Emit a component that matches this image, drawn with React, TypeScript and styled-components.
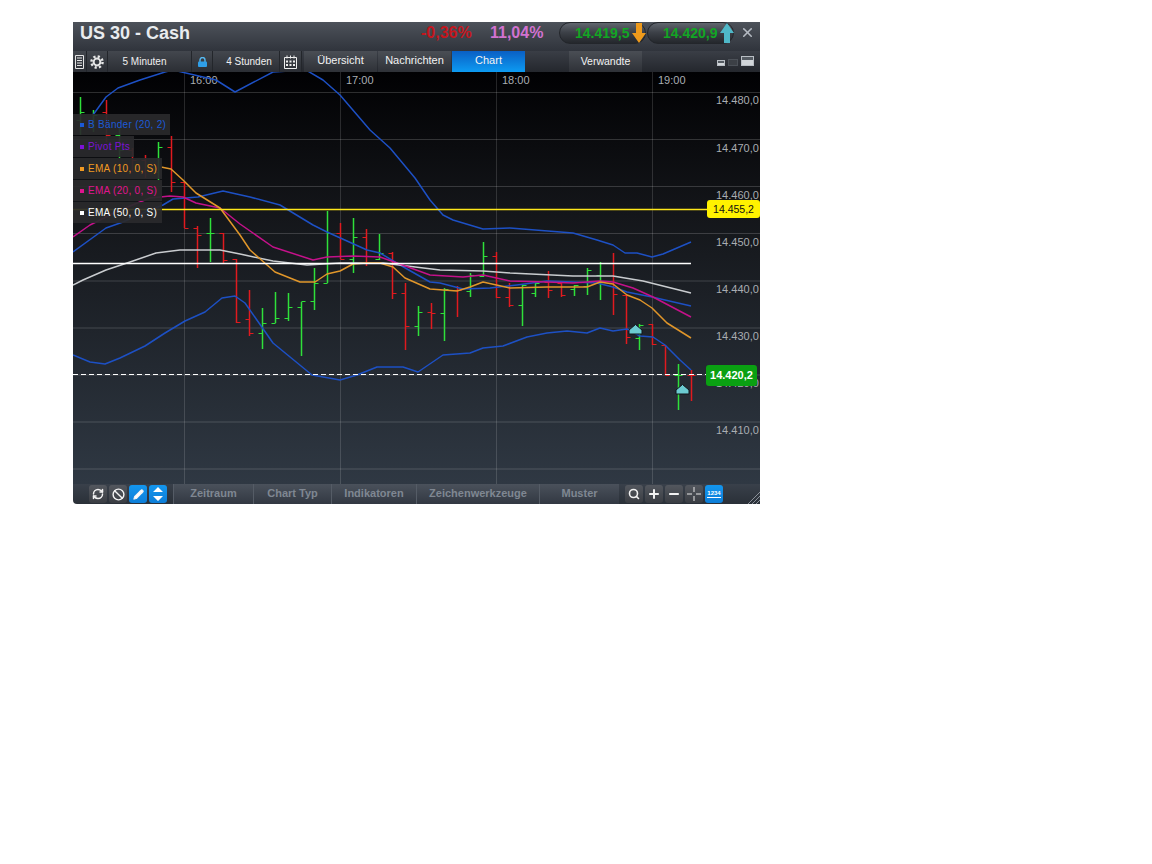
import React from 'react';
import styled, { createGlobalStyle } from 'styled-components';
import { Ban, Minus, Pencil, Plus, RefreshCw, Search, X } from 'lucide-react';

const GlobalStyle = createGlobalStyle`
	html, body {
		margin: 0;
		padding: 0;
		background: #fff;
		font-family: 'Liberation Sans', Arial, sans-serif;
	}
`;

const GREEN = '#2fe03a';
const RED = '#e01a1f';

// k = candle index (13px step from x=80.5), high, low, open tick, close tick
const bars: [number, number, number, number, number, string][] = [
	[0, 97, 135, 120, 112, GREEN], [1, 110, 132, 125, 115, GREEN], [2, 100, 142, 112, 135, RED],
	[3, 128, 158, 135, 150, GREEN], [4, 148, 172, 150, 160, RED], [5, 155, 178, 160, 170, RED],
	[6, 142, 180, 172, 147, GREEN], [7, 136, 192, 147, 182, RED], [8, 182, 228, 182, 228, RED],
	[9, 226, 268, 228, 235, RED], [10, 218, 262, 233, 233, GREEN], [11, 233, 263, 233, 260, RED],
	[12, 259, 323, 259, 322, RED], [13, 290, 336, 319, 333, RED], [14, 308, 349, 333, 323, GREEN],
	[15, 292, 323, 323, 318, GREEN], [16, 293, 321, 318, 307, GREEN], [17, 302, 356, 307, 301, GREEN],
	[18, 268, 310, 301, 283, GREEN], [19, 211, 283, 283, 233, GREEN], [20, 223, 259, 233, 259, RED],
	[21, 218, 273, 259, 237, GREEN], [22, 229, 266, 237, 263, RED], [23, 234, 260, 259, 253, GREEN],
	[24, 252, 299, 253, 293, RED], [25, 283, 350, 293, 326, RED], [26, 306, 336, 326, 312, GREEN],
	[27, 303, 329, 312, 313, RED], [28, 288, 341, 313, 289, GREEN], [29, 286, 317, 290, 290, RED],
	[30, 273, 297, 291, 275, GREEN], [31, 242, 277, 276, 256, GREEN], [32, 252, 298, 256, 297, RED],
	[33, 283, 307, 297, 305, RED], [34, 285, 326, 305, 285, GREEN], [35, 282, 297, 293, 283, GREEN],
	[36, 271, 298, 282, 290, RED], [37, 282, 297, 283, 295, RED], [38, 285, 296, 289, 285, GREEN],
	[39, 268, 295, 286, 270, GREEN], [40, 262, 300, 275, 263, GREEN], [41, 253, 315, 263, 294, RED],
	[42, 295, 344, 295, 337, RED], [43, 324, 350, 338, 325, GREEN], [44, 324, 345, 324, 344, RED],
	[45, 345, 375, 345, 375, RED], [46, 364, 410, 375, 375, GREEN], [47, 370, 401, 375, 375, RED],
];

const lines: { color: string; pts: string }[] = [
	{ color: '#1d50c4', pts: '93,115 106,97 118,88 140,80 165,72 173,70 216,80 235,92 273,72 306,70 323,80 340,95 370,130 390,148 415,178 430,200 443,215 453,220 483,229 510,228 573,233 597,240 613,245 625,253 637,253 652,257 663,254 691,242' },
	{ color: '#1d50c4', pts: '73,252 106,228 123,222 145,212 163,205 173,199 198,197 223,191 250,197 280,205 313,225 327,232 367,250 380,253 400,265 430,282 440,283 463,289 490,288 517,285 547,281 573,282 597,283 613,287 627,292 652,297 691,306' },
	{ color: '#1d50c4', pts: '73,355 90,362 105,364 120,358 145,346 165,333 185,321 205,312 222,298 235,296 245,303 273,343 312,375 340,380 357,375 377,367 403,367 418,372 443,355 470,353 483,348 503,346 527,337 547,333 567,331 587,333 600,328 613,331 627,329 640,336 653,337 665,345 680,360 691,370' },
	{ color: '#c9cccf', pts: '73,285 83,280 106,270 130,262 156,253 180,250 220,250 240,254 273,261 307,265 340,263 383,263 407,266 440,270 483,271 510,273 573,276 613,276 643,281 691,293' },
	{ color: '#c4118a', pts: '73,237 90,225 120,210 150,198 170,196 183,197 196,203 220,208 240,224 273,247 313,260 327,257 353,256 380,257 397,263 430,275 463,277 483,275 510,281 547,282 573,283 600,281 613,282 633,288 653,297 691,317' },
	{ color: '#e0962a', pts: '161,167 171,169 183,180 196,193 220,208 240,235 250,250 275,272 300,282 315,282 327,274 340,271 353,264 367,263 380,263 393,267 405,278 430,289 457,291 470,287 483,282 510,288 547,287 587,287 600,282 613,284 627,295 640,300 652,308 667,323 691,338' },
];

const gridY = [92.5, 139.5, 186.5, 233.5, 281, 328, 375, 422, 469];
const gridX = [184.5, 340.5, 496.5, 652.5];
const times = ['16:00', '17:00', '18:00', '19:00'];
const prices: [string, number][] = [
	['14.480,0', 104], ['14.470,0', 152], ['14.460,0', 199], ['14.450,0', 246],
	['14.440,0', 293], ['14.430,0', 340], ['14.420,0', 387], ['14.410,0', 434],
];
const legend: [string, string, number][] = [
	['B Bänder (20, 2)', '#1c5ad8', 97],
	['Pivot Pts', '#7d12d6', 61],
	['EMA (10, 0, S)', '#f09a22', 89],
	['EMA (20, 0, S)', '#e0148e', 89],
	['EMA (50, 0, S)', '#ffffff', 89],
];

export default function App() {
	return (
		<Page>
			<GlobalStyle />
			<Window>
				<Header>
					<Title>US 30 - Cash</Title>
					<Change>-0,36%</Change>
					<Percent>11,04%</Percent>
					<Pills>
						<Pill>
							14.419,5
							<ArrowIcon viewBox="0 0 14 20">
								<path d="M4 0h6v10h4L7 20 0 10h4z" fill="#ee9a1c" />
							</ArrowIcon>
						</Pill>
						<Pill>
							14.420,9
							<ArrowIcon viewBox="0 0 14 20">
								<path d="M4 20h6V10h4L7 0 0 10h4z" fill="#4fb8c8" />
							</ArrowIcon>
						</Pill>
					</Pills>
					<CloseButton>
						<X size={15} strokeWidth={2.6} />
					</CloseButton>
				</Header>

				<TabBar>
					<ToolCell $width={14}>
						<svg width="9" height="14" viewBox="0 0 9 14">
							<path d="M.5.5h8v13h-8zM2 3h5M2 5.5h5M2 8h5M2 10.5h5" fill="none" stroke="#e4e4e4" />
						</svg>
					</ToolCell>
					<ToolCell $width={21}>
						<svg width="14" height="14" viewBox="0 0 14 14" fill="none" stroke="#e6e6e6">
							<circle cx="7" cy="7" r="3.4" strokeWidth="2" />
							<circle cx="7" cy="7" r="5.6" strokeWidth="2.4" strokeDasharray="2.2 2.2" />
						</svg>
					</ToolCell>
					<TimeCell $width={84} $shift={-5}>5 Minuten</TimeCell>
					<ToolCell $width={21}>
						<svg width="9" height="10" viewBox="0 0 9 10">
							<path d="M2 5V3a2.5 2.5 0 0 1 5 0v2" fill="none" stroke="#56b8f0" strokeWidth="1.4" />
							<rect y="4.5" width="9" height="5.5" rx="1" fill="#2f9fe8" />
						</svg>
					</ToolCell>
					<TimeCell $width={67} $shift={3}>4 Stunden</TimeCell>
					<ToolCell $width={22}>
						<svg width="13" height="14" viewBox="0 0 13 14">
							<path d="M.5 2.5h12v11H.5zM3 .5v3M6.5.5v3M10 .5v3" fill="none" stroke="#eee" />
							<path d="M2 5.5h2v2H2zM5.5 5.5h2v2h-2zM9 5.5h2v2H9zM2 9h2v2H2zM5.5 9h2v2h-2zM9 9h2v2H9z" fill="#eee" />
						</svg>
					</ToolCell>
					<Tab $left={2}>Übersicht</Tab>
					<Tab $left={1}>Nachrichten</Tab>
					<Tab $left={1} $active>Chart</Tab>
					<Tab $left={44} $small>Verwandte</Tab>
					<WindowIcons>
						<SizeIcon $w={6} $h={4} />
						<SizeIcon $w={8} $h={5} $dim />
						<SizeIcon $w={11} $h={8} />
					</WindowIcons>
				</TabBar>

				<ChartArea>
					<ChartSvg viewBox="73 72 687 412" width="687" height="412">
						<defs>
							<linearGradient id="chartBg" x1="0" y1="0" x2="0" y2="1">
								<stop offset="0" stopColor="#010103" />
								<stop offset="0.35" stopColor="#14161a" />
								<stop offset="1" stopColor="#2f3843" />
							</linearGradient>
						</defs>
						<rect x="73" y="72" width="687" height="412" fill="url(#chartBg)" />
						{gridY.map((y) => (
							<line key={y} x1="73" x2="760" y1={y} y2={y} stroke="#fff" strokeOpacity="0.17" />
						))}
						{gridX.map((x) => (
							<line key={x} x1={x} x2={x} y1="72" y2="484" stroke="#fff" strokeOpacity="0.14" />
						))}
						{times.map((t, i) => (
							<AxisText key={t} x={gridX[i] + 5.5} y="84">{t}</AxisText>
						))}
						{prices.map(([p, y]) => (
							<AxisText key={p} x="716" y={y}>{p}</AxisText>
						))}
						{bars.map(([k, high, low, open, close, color]) => {
							const x = 80.5 + k * 13;
							return (
								<g key={k} stroke={color} fill="none">
									<path d={`M${x} ${high}V${low}`} strokeWidth="1.5" />
									<path d={`M${x - 4} ${open + 0.5}H${x}M${x} ${close + 0.5}H${x + 4}`} />
								</g>
							);
						})}
						{lines.map((l) => (
							<polyline key={l.pts} points={l.pts} fill="none" stroke={l.color} strokeWidth="1.5" strokeLinejoin="round" />
						))}
						<line x1="73" x2="691" y1="263.5" y2="263.5" stroke="#fff" strokeWidth="1.3" />
						<line x1="73" x2="710" y1="209.5" y2="209.5" stroke="#ffe81a" strokeWidth="1.6" />
						<line x1="73" x2="710" y1="374.5" y2="374.5" stroke="#fff" strokeWidth="1.2" strokeDasharray="5 3" />
						{[[635.5, 324.5], [682.5, 384.5]].map(([x, y]) => (
							<path
								key={x}
								d={`M${x} ${y}l6.5 5.5v4h-13v-4z`}
								fill="#6ccbd2"
								stroke="#10151b"
							/>
						))}
					</ChartSvg>

					<LegendStack>
						{legend.map(([label, color, width]) => (
							<LegendRow key={label} $color={color} $width={width}>
								<LegendDot $color={color} />
								{label}
							</LegendRow>
						))}
					</LegendStack>

					<PriceTag $top={128} $left={634} $width={53} $height={18} $bg="#fff200" $fg="#111">14.455,2</PriceTag>
					<PriceTag $top={293} $left={633} $width={51} $height={21} $bg="#0aa012" $fg="#fff" $bold>14.420,2</PriceTag>
				</ChartArea>

				<Footer>
					<FooterTools $width={100}>
						<IconButton><RefreshCw size={12} strokeWidth={3} /></IconButton>
						<IconButton><Ban size={13} strokeWidth={2.6} /></IconButton>
						<IconButton $active><Pencil size={11} strokeWidth={2.4} fill="#fff" /></IconButton>
						<IconButton $active>
							<svg width="12" height="14" viewBox="0 0 12 14">
								<path d="M6 0l5 5H1zM6 14L1 9h10z" fill="#fff" />
							</svg>
						</IconButton>
					</FooterTools>
					<FooterTab $width={80}>Zeitraum</FooterTab>
					<FooterTab $width={78}>Chart Typ</FooterTab>
					<FooterTab $width={85}>Indikatoren</FooterTab>
					<FooterTab $width={123}>Zeichenwerkzeuge</FooterTab>
					<FooterTab $width={80}>Muster</FooterTab>
					<ZoomTools>
						<IconButton><Search size={12} strokeWidth={3.2} /></IconButton>
						<IconButton><Plus size={14} strokeWidth={3.4} /></IconButton>
						<IconButton><Minus size={14} strokeWidth={3.4} /></IconButton>
						<IconButton>
							<svg width="14" height="14" viewBox="0 0 14 14">
								<path d="M7 0v5M7 9v5M0 7h5M9 7h5" stroke="#e8e8e8" fill="none" />
							</svg>
						</IconButton>
						<IconButton $active><NumbersLabel>1234</NumbersLabel></IconButton>
					</ZoomTools>
					<Grip viewBox="0 0 13 13">
						<path d="M13 1L1 13M13 5L5 13M13 9L9 13" stroke="#8a9099" fill="none" />
					</Grip>
				</Footer>
			</Window>
		</Page>
	);
}

const Page = styled.div`
	padding: 22px 0 0 73px;
`;

const Window = styled.div`
	width: 687px;
	display: flex;
	flex-direction: column;
	overflow: hidden;
	border-bottom-left-radius: 4px;
`;

const Header = styled.div`
	height: 29px;
	display: flex;
	align-items: flex-start;
	background: linear-gradient(#4d525a, #30343c);
	color: #eee;
`;

const Title = styled.div`
	width: 348px;
	padding: 2px 0 0 7px;
	box-sizing: border-box;
	font-size: 18px;
	line-height: 19px;
	font-weight: bold;
	color: #e9ecef;
`;

const Change = styled.div`
	width: 69px;
	padding-top: 2px;
	font-size: 16px;
	line-height: 18px;
	font-weight: bold;
	color: #c5161d;
`;

const Percent = styled.div`
	width: 69px;
	padding-top: 2px;
	font-size: 16px;
	line-height: 18px;
	font-weight: bold;
	color: #d272d0;
`;

const Pills = styled.div`
	display: flex;
	gap: 1px;
`;

const Pill = styled.div`
	position: relative;
	width: 87px;
	height: 22px;
	box-sizing: border-box;
	padding: 1px 0 0 15px;
	border-radius: 11px;
	border: 1px solid #23262b;
	background: linear-gradient(#61666e, #3c4047 48%, #24272c);
	color: #12a624;
	font-size: 14px;
	line-height: 19px;
	font-weight: bold;
`;

const ArrowIcon = styled.svg`
	position: absolute;
	right: -1px;
	top: 0;
	width: 14px;
	height: 20px;
`;

const CloseButton = styled.div`
	margin-left: 6px;
	padding-top: 3px;
	color: #b4bac2;
	display: flex;
`;

const TabBar = styled.div`
	height: 21px;
	display: flex;
	align-items: stretch;
	background: linear-gradient(#3a3e46, #24272d);
	color: #eee;
`;

const ToolCell = styled.div<{ $width: number }>`
	width: ${(p) => p.$width}px;
	flex: none;
	display: flex;
	align-items: center;
	justify-content: center;
	box-sizing: border-box;
	border-right: 1px solid #23262b;
	background: linear-gradient(#43474e, #2b2e34);
	color: #e6e6e6;
`;

const TimeCell = styled.div<{ $width: number; $shift: number }>`
	width: ${(p) => p.$width}px;
	flex: none;
	box-sizing: border-box;
	padding-left: ${(p) => Math.max(p.$shift, 0) * 2}px;
	padding-right: ${(p) => Math.max(-p.$shift, 0) * 2}px;
	border-right: 1px solid #23262b;
	text-align: center;
	font-size: 10px;
	line-height: 22px;
	color: #f0f0f0;
	background: linear-gradient(#43474e, #2b2e34);
`;

const Tab = styled.div<{ $left: number; $active?: boolean; $small?: boolean }>`
	width: 73px;
	flex: none;
	margin-left: ${(p) => p.$left}px;
	text-align: center;
	font-size: ${(p) => (p.$small ? '10.5px' : '11px')};
	line-height: ${(p) => (p.$small ? '21px' : '18px')};
	color: #f2f2f2;
	background: ${(p) => (p.$active ? 'linear-gradient(#0a5fc4, #0d9bf2)' : 'linear-gradient(#4a4e55, #2e3137)')};
`;

const WindowIcons = styled.div`
	margin-left: 75px;
	display: flex;
	align-items: flex-start;
	gap: 3px;
	padding-top: 5px;
`;

const SizeIcon = styled.div<{ $w: number; $h: number; $dim?: boolean }>`
	width: ${(p) => p.$w}px;
	height: ${(p) => p.$h}px;
	margin-top: ${(p) => 8 - p.$h}px;
	border: 1px solid ${(p) => (p.$dim ? '#4c5158' : '#b9bec4')};
	background: ${(p) => (p.$dim ? '#3c4046' : 'linear-gradient(#555b62 40%, #d2d6da 40%)')};
	box-sizing: content-box;
`;

const ChartArea = styled.div`
	position: relative;
	height: 412px;
`;

const ChartSvg = styled.svg`
	display: block;
`;

const AxisText = styled.text`
	font-family: 'Liberation Sans', Arial, sans-serif;
	font-size: 11px;
	fill: #a9adb2;
`;

const LegendStack = styled.div`
	position: absolute;
	left: 0;
	top: 42px;
	display: flex;
	flex-direction: column;
	align-items: flex-start;
	gap: 1px;
`;

const LegendRow = styled.div<{ $color: string; $width: number }>`
	width: ${(p) => p.$width}px;
	height: 21px;
	box-sizing: border-box;
	padding-left: 7px;
	display: flex;
	align-items: center;
	gap: 4px;
	background: rgba(42, 42, 44, 0.93);
	color: ${(p) => p.$color};
	font-size: 10px;
	letter-spacing: 0.3px;
	white-space: pre;
`;

const LegendDot = styled.span<{ $color: string }>`
	width: 4px;
	height: 4px;
	flex: none;
	background: ${(p) => p.$color};
`;

const PriceTag = styled.div<{ $top: number; $left: number; $width: number; $height: number; $bg: string; $fg: string; $bold?: boolean }>`
	position: absolute;
	top: ${(p) => p.$top}px;
	left: ${(p) => p.$left}px;
	width: ${(p) => p.$width}px;
	height: ${(p) => p.$height}px;
	line-height: ${(p) => p.$height}px;
	border-radius: 3px;
	text-align: center;
	background: ${(p) => p.$bg};
	color: ${(p) => p.$fg};
	font-size: ${(p) => (p.$bold ? '11px' : '10.5px')};
	font-weight: ${(p) => (p.$bold ? 'bold' : 'normal')};
`;

const Footer = styled.div`
	height: 20px;
	display: flex;
	align-items: stretch;
	background: linear-gradient(#39404a, #2a3038);
`;

const FooterTools = styled.div<{ $width: number }>`
	width: ${(p) => p.$width}px;
	flex: none;
	display: flex;
	gap: 2px;
	padding-left: 16px;
	box-sizing: border-box;
	align-items: center;
`;

const IconButton = styled.div<{ $active?: boolean }>`
	width: 18px;
	height: 18px;
	flex: none;
	display: flex;
	align-items: center;
	justify-content: center;
	border-radius: 3px;
	color: #f2f2f2;
	background: ${(p) => (p.$active ? 'linear-gradient(#1396ee, #0d7ed8)' : 'linear-gradient(#53575e, #3a3d43)')};
`;

const NumbersLabel = styled.span`
	font-size: 6px;
	font-weight: bold;
	color: #fff;
	border-bottom: 1px solid #fff;
	line-height: 7px;
`;

const FooterTab = styled.div<{ $width: number }>`
	width: ${(p) => p.$width}px;
	flex: none;
	box-sizing: border-box;
	border-left: 1px solid #555c66;
	text-align: center;
	font-size: 11px;
	line-height: 18px;
	font-weight: bold;
	color: #7f8792;
	background: linear-gradient(#4a515b, #323842);
`;

const ZoomTools = styled.div`
	display: flex;
	align-items: center;
	gap: 2px;
	margin-left: 6px;
`;

const Grip = styled.svg`
	width: 13px;
	height: 13px;
	margin: 7px 0 0 auto;
`;
